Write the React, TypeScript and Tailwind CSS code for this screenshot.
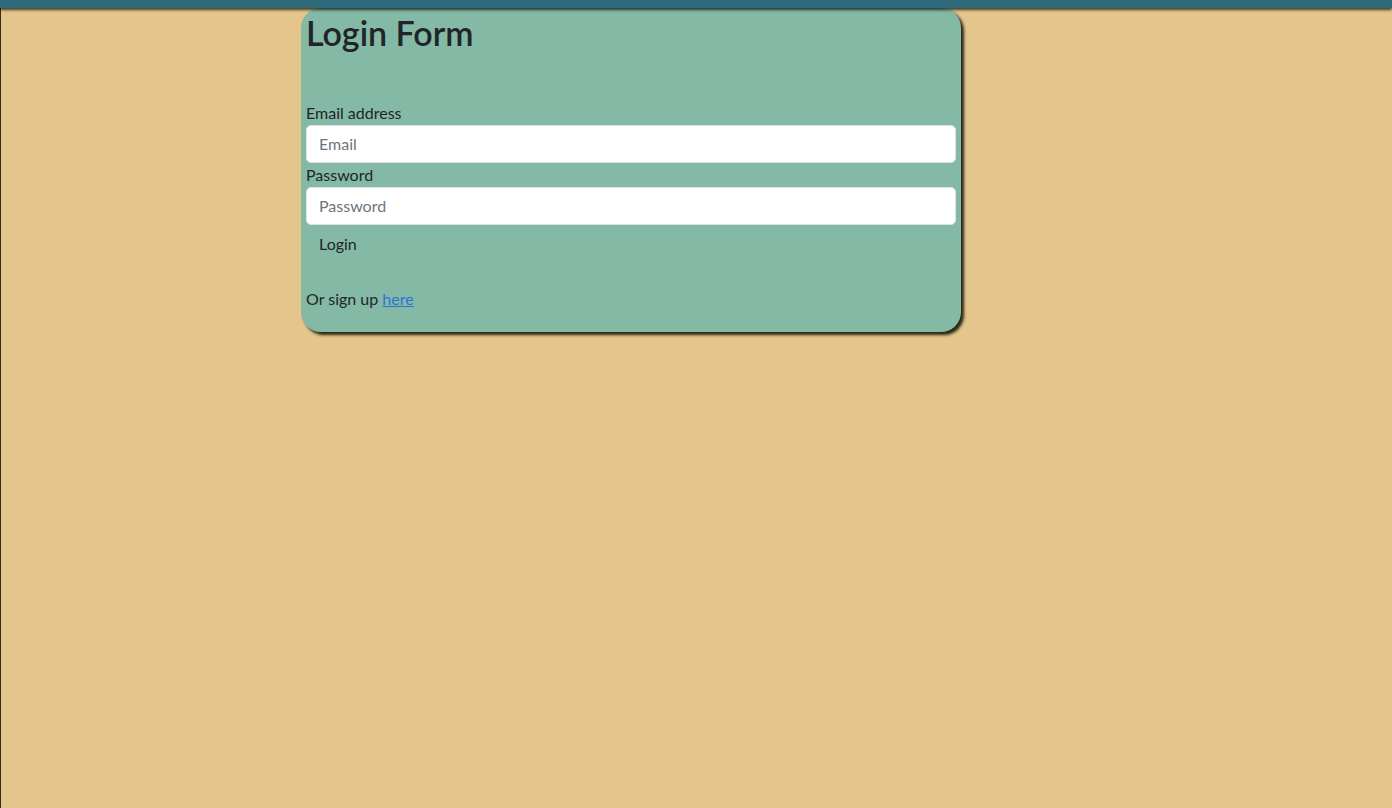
import React, { useState } from "react";

const App = () => {
  const [email, setEmail] = useState("");
  const [password, setPassword] = useState("");

  const handleEmailChange = (event: any) => setEmail(event.target.value);
  const handlePasswordChange = (event: any) => setPassword(event.target.value);

  const handleLogin = (event: any) => {
    event.preventDefault();
  };

  return (
    <div
      className="min-h-screen flex flex-col bg-[#e4c68c] text-[#212529]"
      style={{ fontFamily: "Lato, 'Open Sans', sans-serif" }}
    >
      <nav className="h-2 bg-[#2e6a7a] shadow-[0_2px_3px_rgba(0,0,0,0.7)] relative z-10" />
      <main className="flex-1 border-l border-[#3a2a18]">
        <div className="ml-[300px] w-[660px] p-[5px] bg-[#84b9a5] rounded-[20px] shadow-[3px_3px_3px_rgba(20,20,10,0.9)]">
          <h2 className="text-[34px] leading-[1.2] font-semibold mb-[47px]">Login Form</h2>
          <form>
            <label className="block text-base leading-6">Email address</label>
            <input
              type="email"
              value={email}
              onChange={handleEmailChange}
              placeholder="Email"
              className="block w-full px-3 py-1.5 text-base leading-6 bg-white border border-[#dee2e6] rounded-[5px] placeholder:text-[#6c757d] focus:outline-none"
            />
            <label className="block text-base leading-6">Password</label>
            <input
              type="password"
              value={password}
              onChange={handlePasswordChange}
              placeholder="Password"
              className="block w-full px-3 py-1.5 text-base leading-6 bg-white border border-[#dee2e6] rounded-[5px] placeholder:text-[#6c757d] focus:outline-none"
            />
            <button
              type="submit"
              onClick={handleLogin}
              className="block px-3 py-1.5 text-base leading-6 border border-transparent rounded-[5px]"
            >
              Login
            </button>
          </form>
          <br />
          <p className="text-base leading-6 mb-4">
            Or sign up{" "}
            <a href="#" className="text-[#2a74d6] underline">
              here
            </a>
          </p>
        </div>
      </main>
    </div>
  );
};

export default App;
